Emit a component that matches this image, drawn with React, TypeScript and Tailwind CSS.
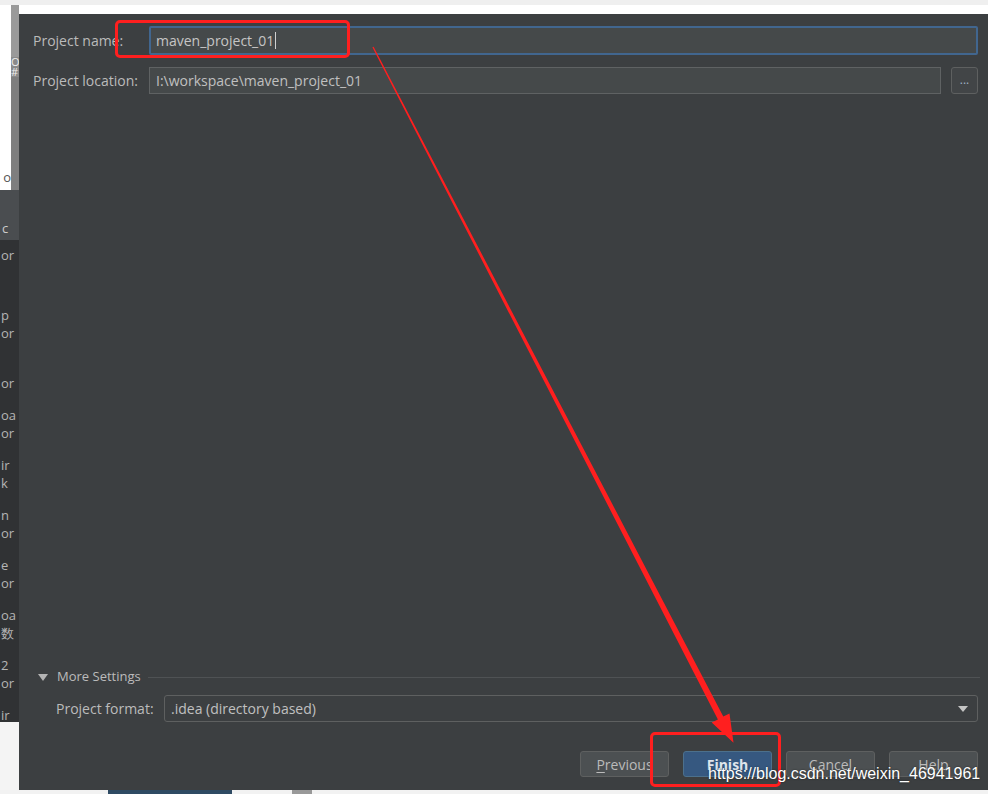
import React from 'react';

const LEFT_PAIRS: [string, string][] = [
  ['p', 'or'],
  ['', 'or'],
  ['oa', 'or'],
  ['ir', 'k'],
  ['n', 'or'],
  ['e', 'or'],
  ['oa', '数'],
  ['2', 'or'],
  ['ir', ''],
];

const Button: React.FC<{ label: React.ReactNode; primary?: boolean }> = ({ label, primary }) => (
  <div
    className={
      primary
        ? 'w-[89px] h-[26px] flex items-center justify-center rounded-[3px] border border-[#4c708c] bg-[#365880] text-[14px] font-bold text-[#dfe5ec]'
        : 'w-[89px] h-[26px] flex items-center justify-center rounded-[3px] border border-[#5e6060] bg-[#4c5052] text-[14px] text-[#bbbbbb]'
    }
  >
    {label}
  </div>
);

export default function App() {
  return (
    <div className="relative w-[988px] h-[794px] overflow-hidden bg-white font-['Open_Sans',sans-serif]">
      <div className="h-[5px] bg-[#efefef]" />
      <div className="flex h-[785px]">
        {/* background window peeking out on the left */}
        <div className="w-[19px] flex flex-col overflow-hidden text-[13px] leading-[18px]">
          <div className="flex h-[185px] shrink-0">
            <div className="w-[11px] bg-white flex flex-col">
              <div className="h-[163px]" />
              <div className="text-[#555] text-right">o</div>
            </div>
            <div className="w-[8px] bg-[#8a8a8a] flex flex-col">
              <div className="h-[52px] bg-[#9a9a9a]" />
              <div className="text-[#eee] text-[11px] leading-[10px]">O</div>
              <div className="text-[#eee] text-[11px] leading-[10px]">#</div>
              <div className="flex-1 bg-[#7e7e7e]" />
            </div>
          </div>
          <div className="h-[50px] shrink-0 bg-[#4a4d50] text-[#ccc] pt-[29px] pl-[2px]">c</div>
          <div className="flex-1 min-h-0 overflow-hidden bg-[#303234] text-[#b5b5b5] flex flex-col pl-[1px]">
            <div className="h-[6px] shrink-0" />
            <div className="shrink-0">or</div>
            <div className="h-[42px] shrink-0" />
            {LEFT_PAIRS.map(([a, b], i) => (
              <div key={i} className="h-[50px] shrink-0 flex flex-col">
                <div className="h-[18px]">{a}</div>
                <div className="h-[18px]">{b}</div>
              </div>
            ))}
          </div>
          <div className="h-[68px] shrink-0 bg-[#f4f4f4]" />
        </div>

        <div className="flex-1 flex flex-col">
          <div className="h-[9px] bg-white" />
          {/* dialog */}
          <div className="flex-1 bg-[#3c3f41] flex flex-col pt-[12px] pr-[10px] pb-[13px] text-[14px] text-[#bbbbbb]">
            <div className="flex items-center h-[29px] pl-[14px]">
              <div className="w-[116px]">Project name:</div>
              <div className="flex-1 h-[29px] border-2 border-[#41668f] rounded-[2px] bg-[#45494a] flex items-center pl-[5px] text-[#c5c5c5]">
                maven_project_01
                <span className="ml-[1px] w-px h-[17px] bg-[#d0d0d0]" />
              </div>
            </div>

            <div className="flex items-center h-[27px] mt-[12px] pl-[14px]">
              <div className="w-[116px]">Project location:</div>
              <div className="flex-1 h-[27px] border border-[#5f6263] bg-[#45494a] flex items-center pl-[6px] text-[#c0c0c0]">
                I:\workspace\maven_project_01
              </div>
              <div className="ml-[10px] w-[27px] h-[27px] rounded-[3px] border border-[#5e6060] bg-[#424547] flex items-center justify-center text-[#9eb2c4] text-[12px] leading-none pb-[2px]">
                ...
              </div>
            </div>

            <div className="flex-1" />

            <div className="flex items-center h-[16px] pl-[19px]">
              <svg width="10" height="7" viewBox="0 0 10 7" className="mr-[9px]">
                <path d="M0 0 L10 0 L5 7 Z" fill="#b4b4b4" />
              </svg>
              <span className="text-[13px] text-[#bbbbbb]">More Settings</span>
              <div className="flex-1 ml-[7px] mr-[-2px] h-px bg-[#4f5254]" />
            </div>

            <div className="flex items-center h-[27px] mt-[10px] pl-[37px]">
              <div className="w-[108px]">Project format:</div>
              <div className="flex-1 h-[27px] rounded-[3px] border border-[#5e6060] bg-[#3c3f41] flex items-center pl-[6px] pr-[9px] text-[#c0c0c0]">
                <span className="flex-1">.idea (directory based)</span>
                <svg width="10" height="6" viewBox="0 0 10 6">
                  <path d="M0 0 L10 0 L5 6 Z" fill="#c4c4c4" />
                </svg>
              </div>
            </div>

            <div className="flex-1 max-h-[29px]" />

            <div className="flex justify-end gap-[14px] h-[26px]">
              <Button
                label={
                  <span>
                    <span className="underline underline-offset-2">P</span>revious
                  </span>
                }
              />
              <Button label="Finish" primary />
              <Button label="Cancel" />
              <Button label="Help" />
            </div>
          </div>
        </div>
      </div>
      <div className="h-[4px] flex bg-[#f2f2f2]">
        <div className="w-[108px]" />
        <div className="w-[124px] bg-[#2e4a63]" />
        <div className="w-[60px]" />
        <div className="w-[20px] bg-[#999]" />
      </div>

      {/* red annotations */}
      <div className="absolute left-[115px] top-[20px] w-[235px] h-[38px] border-[3px] border-[#ff1f1f] rounded-[5px]" />
      <div className="absolute left-[650px] top-[732px] w-[131px] h-[55px] border-[3px] border-[#ff1f1f] rounded-[5px]" />
      <svg className="absolute left-0 top-0 pointer-events-none" width="988" height="794" viewBox="0 0 988 794">
        <polygon
          points="372.4,47.2 373.6,46.8 723.3,716.6 729.5,713.4 733.5,742.8 711.7,722.6 717.9,719.4"
          fill="#ff1f1f"
        />
      </svg>

      <div className="absolute left-[708px] top-[764px] text-[16px] leading-[20px] text-white font-['Liberation_Sans',Arial,sans-serif] [text-shadow:0_0_2px_rgba(0,0,0,0.6)]">
        https://blog.csdn.net/weixin_46941961
      </div>
    </div>
  );
}
